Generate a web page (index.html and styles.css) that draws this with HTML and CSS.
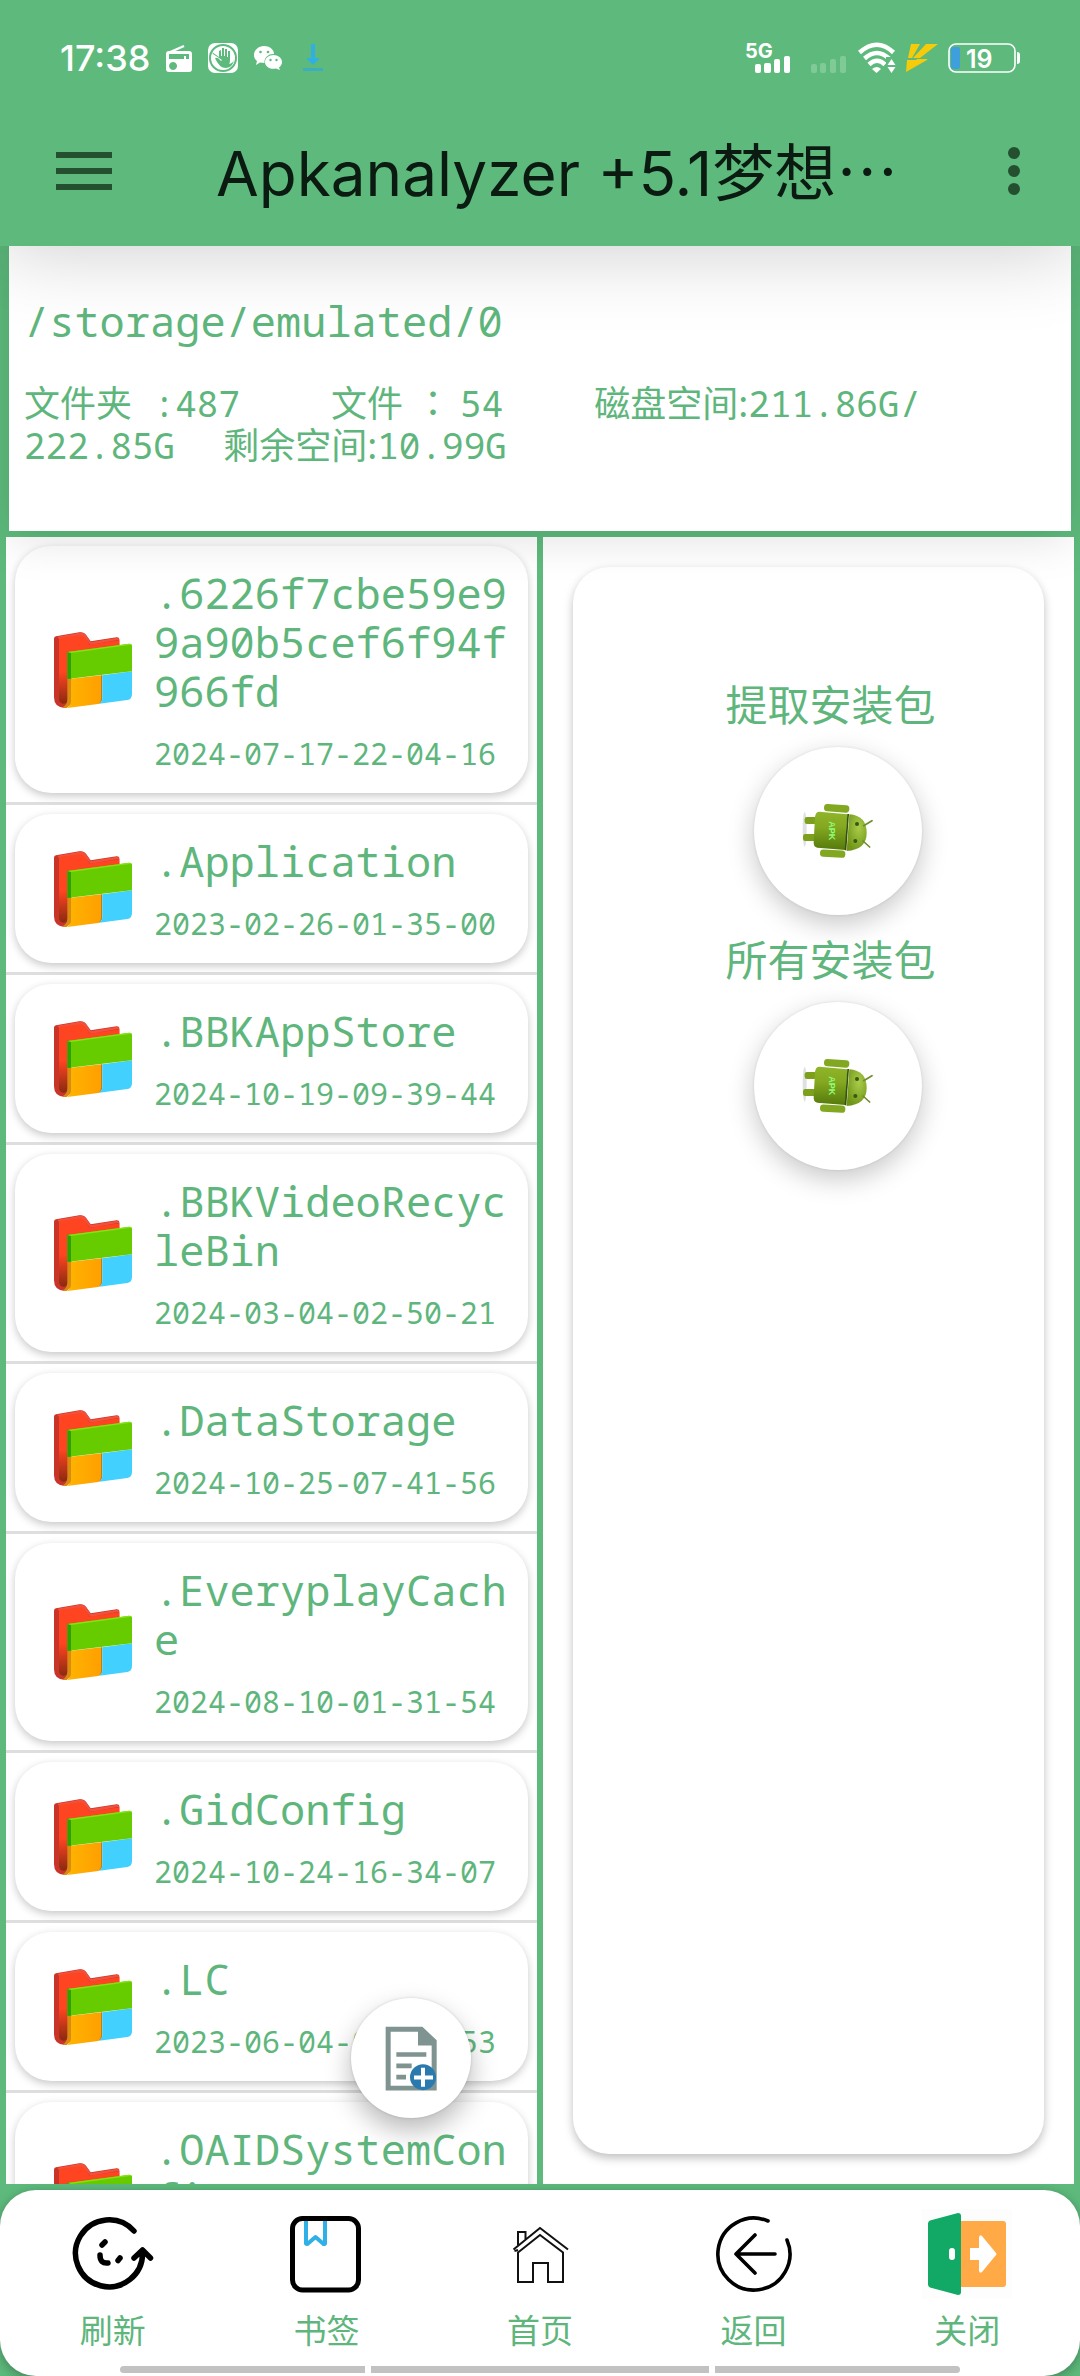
FILE: index.html
```html
<!DOCTYPE html>
<html lang="zh-CN">
<head>
  <meta charset="UTF-8" />
  <meta name="viewport" content="width=device-width, initial-scale=1.0"/>
  <title>Apkanalyzer</title>
  <link rel="stylesheet" href="styles.css">
</head>
<body>
  <!-- 公用图标 -->
  <svg class="defs" aria-hidden="true">
    <defs>
      <linearGradient id="g-side" x1="0" y1="0" x2="0" y2="1">
        <stop offset="0.5" stop-color="#ff4422"/>
        <stop offset="1" stop-color="#8a2a10"/>
      </linearGradient>
      <linearGradient id="g-orange" x1="0" y1="0" x2="1" y2="0">
        <stop offset="0" stop-color="#ffb400"/>
        <stop offset="1" stop-color="#ff9f00"/>
      </linearGradient>
      <linearGradient id="g-body" x1="0" y1="0" x2="0" y2="1">
        <stop offset="0" stop-color="#8fb52a"/>
        <stop offset="0.4" stop-color="#84a820"/>
        <stop offset="1" stop-color="#557a0c"/>
      </linearGradient>
      <radialGradient id="g-head" cx="0.6" cy="0.35" r="0.7">
        <stop offset="0" stop-color="#a9cc4a"/>
        <stop offset="1" stop-color="#6f9416"/>
      </radialGradient>
    </defs>
    <symbol id="folder" viewBox="42 62 234 228">
      <path fill="#c93429" d="M42 82q0-6 6-7l70-12q14-2 21 9l13 18 78-12q8 0 8 7v30L84 130v150l-10 10q-32-2-32-32z"/>
      <path fill="#f0503c" d="M52 76l66-12q14-2 20 8l14 20 79-13q6 0 7 6l-86 16-18-20q-6-8-14-6l-62 9z"/>
      <path fill="#ff4422" d="M57 86q0-6 6-7l58-7q10 0 16 10l12 18 89-13v28L84 140l-27 10z"/>
      <path fill="url(#g-side)" d="M57 84h27v180q-2 14-14 13t-13-14z"/>
      <path fill="#d98a10" d="M82 200h13v78l-15 12q-6 1-12-2 14-7 14-24z"/>
      <path fill="url(#g-orange)" d="M93 202l91-10v68q0 16-10 18l-92 12q11-8 11-20z"/>
      <path fill="#a8842a" d="M183 192h4v68q0 12-8 16l-5 2q9-6 9-18z"/>
      <path fill="#42d0ff" d="M187 192l89-12v68q0 16-14 18l-84 11q9-6 9-18z"/>
      <path fill="#66cc00" d="M82 122l186-25q8 0 8 7v76L82 203z"/>
      <path fill="#2fa000" d="M82 120l11 4v78l-11 1z"/>
      <path fill="#85e312" d="M82 122l186-25 7 3-182 25z"/>
    </symbol>
    <symbol id="android" viewBox="360 420 225 180">
      <ellipse cx="374" cy="505" rx="6" ry="52" fill="#999" opacity="0.3"/>
      <rect x="374" y="468" width="36" height="21" rx="7" fill="#7c9f1c"/>
      <rect x="369" y="519" width="40" height="21" rx="7" fill="#7c9f1c"/>
      <rect x="432" y="431" width="76" height="22" rx="10" fill="#82a822" transform="rotate(4 470 442)"/>
      <rect x="420" y="567" width="76" height="22" rx="10" fill="#82a822" transform="rotate(3 458 578)"/>
      <path fill="url(#g-body)" d="M418 452l84 8-6 107-84-7q-12-2-11-16l4-76q2-16 13-16z"/>
      <path fill="#33520a" d="M502 459h5l-8 109h-5z"/>
      <path fill="url(#g-head)" d="M508 460q52 4 52 56 0 50-60 54z"/>
      <path d="M551 494l25-15M549 540l20 18" stroke="#6d8e2a" stroke-width="5" stroke-linecap="round"/>
      <circle cx="531" cy="489" r="6" fill="#3c5710"/>
      <circle cx="526" cy="540" r="6" fill="#3c5710"/>
      <text class="apk" x="481" y="-446" transform="rotate(90)">APK</text>
    </symbol>
  </svg>

  <header class="app-header">
    <div class="status-bar">
      <span class="clock">17:38</span>
      <svg class="icon-radio" width="26" height="28" viewBox="0 0 26 28">
        <path d="M2 9L18 2" stroke="#fff" stroke-width="2.4"/>
        <path fill="#fff" fill-rule="evenodd" d="M3 7h20q3 0 3 3v15q0 3-3 3H3q-3 0-3-3V10q0-3 3-3zM3 10v5h15v-3h2v3h3v-5zM7 18a4 4 0 1 0 .1 0z"/>
      </svg>
      <svg width="30" height="30" viewBox="0 0 30 30">
        <rect width="30" height="30" rx="7" fill="#fff"/>
        <circle cx="15" cy="15" r="13" fill="none" stroke="#5dba7c" stroke-width="2"/>
        <path fill="#5dba7c" d="M4 9l7 5V8l2-1v6h1V5h2v8h1V6h2v8h1V8h2v9q0 3-1 4 4-1 5-4-1 7-8 8-7 0-11-10 3-1 6 3l1-1-9-6z"/>
      </svg>
      <svg width="28" height="24" viewBox="0 0 28 24">
        <path fill="#fff" d="M10 0c5.500 0 10 3.500 10 8-5-.5-10 3-9.500 9l-4.500-.5L2 19l1-4C1 13.500 0 11.500 0 9 0 4 4.500 0 10 0z"/>
        <path fill="#fff" d="M19.500 9c4.500 0 8.500 3 8.500 7 0 2-1 4-3 5.500l1 2.500-4-1.500c-6 1.500-11-2-11-6.500 0-4 4-7 8.500-7z"/>
        <g fill="#5dba7c"><circle cx="6.500" cy="6" r="1.300"/><circle cx="14" cy="6" r="1.300"/><circle cx="16.500" cy="14" r="1.200"/><circle cx="22.500" cy="14" r="1.200"/></g>
      </svg>
      <svg class="icon-down" width="20" height="28" viewBox="0 0 20 28">
        <path fill="#2fb0e0" d="M8 0h4v14h5l-7 7-7-7h5z"/>
        <path fill="#3aafc0" d="M0 24h20v3H0z"/>
      </svg>
      <div class="status-right">
        <svg width="46" height="32" viewBox="0 0 46 32">
          <text class="net" x="0" y="16">5G</text>
          <g fill="#fff"><rect x="10" y="22" width="6" height="9" rx="2"/><rect x="19" y="21" width="7" height="10" rx="2"/><rect x="29" y="17" width="6" height="14" rx="2"/><rect x="39" y="14" width="6" height="17" rx="2"/></g>
        </svg>
        <svg class="sim2" width="35" height="32" viewBox="0 0 35 32">
          <g fill="#7fca97"><rect x="0" y="22" width="6" height="9" rx="2"/><rect x="9" y="21" width="6" height="10" rx="2"/><rect x="19" y="17" width="6" height="14" rx="2"/><rect x="29" y="14" width="6" height="17" rx="2"/></g>
        </svg>
        <svg width="38" height="30" viewBox="0 0 38 30">
          <g fill="none" stroke="#fff" stroke-width="4.500">
            <path d="M1.500 9.500Q19-6 35.500 9.500"/>
            <path d="M6.500 15.500Q19 4.500 31 15.500"/>
            <path d="M11 21.500Q19 14 27 21.500"/>
          </g>
          <path fill="#fff" d="M14 26q5-4 9 0l-4.500 4z"/>
          <path fill="#5dba7c" d="M28 14h10v16h-10z"/>
          <path fill="#fff" d="M33.500 16l4 6h-8zM33.500 30l4-6h-8z"/>
        </svg>
        <svg width="32" height="28" viewBox="0 0 32 28">
          <path fill="#f6cb0a" d="M5 0h9L6 14H2zM20 0h12L14 14H7zM1 16h20L0 28zM11 15h11L0 28z"/>
        </svg>
        <svg width="72" height="30" viewBox="0 0 72 30">
          <rect x="1" y="1" width="66" height="28" rx="7" fill="none" stroke="#fff" stroke-width="1.600"/>
          <rect x="3" y="4" width="9" height="22" rx="2" fill="#3e9fdc"/>
          <path fill="#fff" d="M69 9q3 0 3 3v6q0 3-3 3z"/>
          <text class="level" x="18" y="25">19</text>
        </svg>
      </div>
    </div>
    <div class="toolbar">
      <button class="menu-btn" type="button" aria-label="菜单">
        <svg width="56" height="38" viewBox="0 0 56 38"><path fill="#24502f" d="M0 0h56v6H0zM0 16h56v6H0zM0 32h56v6H0z"/></svg>
      </button>
      <h1>Apkanalyzer +5.1梦想<span class="cjk">…</span></h1>
      <button class="more-btn" type="button" aria-label="更多">
        <svg width="12" height="48" viewBox="0 0 12 48"><g fill="#24502f"><circle cx="6" cy="6" r="6"/><circle cx="6" cy="24" r="6"/><circle cx="6" cy="42" r="6"/></g></svg>
      </button>
    </div>
  </header>

  <section class="info">
    <p class="path">/storage/emulated/0</p>
    <p class="stats">
      <span class="stat">文件夹 :487</span><span class="stat">文件<span class="colon" lang="zh-TW">：</span>54</span>磁盘空间<span class="cjk">:</span>211.86G/<wbr><span class="total">222.85G</span>剩余空间<span class="cjk">:</span>10.99G
    </p>
  </section>

  <main class="panes">
    <div class="pane left-pane">
      <ul class="file-list">
        <li><a class="card" href="#"><svg class="folder"><use href="#folder"/></svg><span class="file"><span class="name">.6226f7cbe59e99a90b5cef6f94f966fd</span><time>2024-07-17-22-04-16</time></span></a></li>
        <li><a class="card" href="#"><svg class="folder"><use href="#folder"/></svg><span class="file"><span class="name">.Application</span><time>2023-02-26-01-35-00</time></span></a></li>
        <li><a class="card" href="#"><svg class="folder"><use href="#folder"/></svg><span class="file"><span class="name">.BBKAppStore</span><time>2024-10-19-09-39-44</time></span></a></li>
        <li><a class="card" href="#"><svg class="folder"><use href="#folder"/></svg><span class="file"><span class="name">.BBKVideoRecycleBin</span><time>2024-03-04-02-50-21</time></span></a></li>
        <li><a class="card" href="#"><svg class="folder"><use href="#folder"/></svg><span class="file"><span class="name">.DataStorage</span><time>2024-10-25-07-41-56</time></span></a></li>
        <li><a class="card" href="#"><svg class="folder"><use href="#folder"/></svg><span class="file"><span class="name">.EveryplayCache</span><time>2024-08-10-01-31-54</time></span></a></li>
        <li><a class="card" href="#"><svg class="folder"><use href="#folder"/></svg><span class="file"><span class="name">.GidConfig</span><time>2024-10-24-16-34-07</time></span></a></li>
        <li><a class="card" href="#"><svg class="folder"><use href="#folder"/></svg><span class="file"><span class="name">.LC</span><time>2023-06-04-03-12-53</time></span></a></li>
        <li><a class="card" href="#"><svg class="folder"><use href="#folder"/></svg><span class="file"><span class="name">.OAIDSystemConfig</span><time></time></span></a></li>
      </ul>
      <button class="fab" type="button" aria-label="新建文件">
        <svg width="52" height="65" viewBox="255 196 156 194">
          <path fill="#7f9391" fill-rule="evenodd" d="M257 198h110l43 40v151H257zM272 213v162h123V254h-41v-41z"/>
          <path fill="#7f9391" d="M289 274h90v14h-90zM289 308h46v14h-46zM289 342h29v14h-29z"/>
          <circle cx="369" cy="349" r="39" fill="#2a7ab0"/>
          <path fill="#fff" d="M363 321h12v23h24v12h-24v22h-12v-22h-21v-12h21z"/>
        </svg>
      </button>
    </div>
    <div class="pane right-pane">
      <div class="tools">
        <div class="tool">
          <span id="t-extract">提取安装包</span>
          <button class="round" type="button" aria-labelledby="t-extract"><svg width="75" height="60"><use href="#android"/></svg></button>
        </div>
        <div class="tool">
          <span id="t-all">所有安装包</span>
          <button class="round" type="button" aria-labelledby="t-all"><svg width="75" height="60"><use href="#android"/></svg></button>
        </div>
      </div>
    </div>
  </main>

  <nav class="bottom-bar">
    <a href="#">
      <svg width="90" height="90" viewBox="0 0 90 90" fill="none" stroke="#000" stroke-width="5.500" stroke-linecap="round" stroke-linejoin="round">
        <path d="M66 22A33.500 33.500 0 1 0 74.500 43M66 49l8.500-8 8 8M34 36l3-3M50 51.500l2-2.500M32 46q0 9 8 8"/>
      </svg>
      <span>刷新</span>
    </a>
    <a href="#">
      <svg width="90" height="90" viewBox="0 0 90 90" fill="none" stroke-linejoin="round">
        <path d="M25 11v23.500q1 1 2 0l7.500-6.500 7.500 6.500q1 1 2 0V11" stroke="#2fb0e6" stroke-width="4"/>
        <rect x="11.500" y="9.500" width="66" height="71.500" rx="10" stroke="#000" stroke-width="5"/>
      </svg>
      <span>书签</span>
    </a>
    <a href="#">
      <svg width="90" height="90" viewBox="0 0 90 90" fill="none" stroke="#111" stroke-width="2">
        <path d="M18.500 40.500L45 19l28 21.500M19.500 42l3.500-1M23 36V23h7.500v7M23 43.500L45 26l23 17.500V73H53V54H38v19H23z"/>
      </svg>
      <span>首页</span>
    </a>
    <a href="#">
      <svg width="90" height="90" viewBox="0 0 90 90" fill="none" stroke="#000" stroke-width="3.600" stroke-linecap="round" stroke-linejoin="round">
        <path d="M59 12A36 36 0 1 0 78 31M46 26L27 45l19 19M27 45h39"/>
      </svg>
      <span>返回</span>
    </a>
    <a href="#">
      <svg width="90" height="90" viewBox="0 0 90 90">
        <path fill="#fdfdfd" d="M0 0h90v90H0z"/>
        <rect x="34" y="12" width="50" height="66" rx="3" fill="#ffaa47"/>
        <path fill="#12a866" d="M8 11.500L36 4q3 0 3 3v76q0 3-3 3L8 78.500q-2-1-2-3v-61q0-2 2-3z"/>
        <rect x="27" y="39" width="6" height="12" rx="3" fill="#fff"/>
        <path fill="#fff" d="M48 39h9V28q1-3 3-1l14 17q1 1 0 2L60 63q-2 2-3-1V51h-9z"/>
      </svg>
      <span>关闭</span>
    </a>
    <div class="gesture"><i></i><i></i><i></i></div>
  </nav>
</body>
</html>
```
FILE: styles.css
```css
* {
  box-sizing: border-box;
}

body {
  margin: 0;
  height: 100vh;
  display: flex;
  flex-direction: column;
  overflow: hidden;
  background: #5dba7c;
  color: #5fb67d;
  font-family: "Noto Sans Mono", "Droid Sans Mono", "Liberation Mono", "Noto Sans CJK SC", monospace;
  font-feature-settings: "zero";
}

button {
  padding: 0;
  border: 0;
  background: none;
}

a {
  color: inherit;
  text-decoration: none;
}

svg {
  display: block;
  flex: none;
  overflow: visible;
}

.defs {
  position: absolute;
  width: 0;
  height: 0;
}

/* 顶部 */
.app-header {
  position: relative;
  z-index: 3;
  background: #5dba7c;
  box-shadow: 0 4px 76px rgba(0,0,0,0.2);
}

.status-bar {
  display: flex;
  align-items: center;
  gap: 16px;
  height: 116px;
  padding: 0 60px;
  font-family: Inter, "Noto Sans", sans-serif;
}

.clock {
  font-size: 36px;
  font-weight: 500;
  color: #fff;
}

.icon-down {
  margin-left: 5px;
}

.status-right {
  display: flex;
  align-items: center;
  gap: 10px;
  margin-left: auto;
}

.sim2 {
  margin: 0 2px 0 10px;
}

.net {
  font-size: 20px;
  font-weight: 700;
  fill: #fff;
}

.level {
  font-size: 25px;
  font-weight: 600;
  fill: #fff;
}

.toolbar {
  display: flex;
  align-items: center;
  height: 130px;
  padding: 0 60px 21px 56px;
}

.toolbar h1 {
  flex: 1;
  margin: 0;
  padding: 6px 0 0 104px;
  font-family: Inter, "Noto Sans CJK SC", sans-serif;
  font-size: 62px;
  line-height: 72px;
  font-weight: 400;
  color: #0b1b11;
  white-space: nowrap;
}

/* 路径信息 */
.info {
  position: relative;
  z-index: 2;
  margin: 0 9px;
  padding: 48px 15px 64px;
  background: #fff;
  box-shadow: 0 6px 45px rgba(0,0,0,0.13);
}

.info p {
  margin: 0;
}

.path {
  font-size: 42px;
  line-height: 54px;
}

.info .stats {
  margin-top: 35px;
  font-size: 36px;
  line-height: 42px;
}

.stat {
  margin-right: 91px;
}

.total {
  margin-right: 48px;
}

.cjk {
  font-family: "Noto Sans CJK SC", sans-serif;
  line-height: 0;
}

.colon {
  margin: 0 9px 0 12px;
  font-family: "Noto Sans CJK TC", sans-serif;
  line-height: 0;
}

/* 左右窗格 */
.panes {
  flex: 1;
  display: grid;
  grid-template-columns: 1fr 1fr;
  gap: 6px;
  min-height: 0;
  margin: 6px;
}

.pane {
  position: relative;
  overflow: hidden;
  background: #fff;
}

.file-list {
  margin: 0;
  padding: 0;
  list-style: none;
}

.file-list li {
  padding: 9px;
  border-bottom: 3px solid #dedede;
}

.card {
  display: flex;
  align-items: center;
  gap: 22px;
  padding: 22px 16px 22px 39px;
  border-radius: 36px;
  background: #fff;
  box-shadow: 0 3px 8px rgba(0,0,0,0.22);
}

.folder {
  width: 78px;
  height: 76px;
}

.file {
  flex: 1;
  min-width: 0;
}

.name {
  display: block;
  font-size: 42px;
  line-height: 49px;
  word-break: break-all;
}

time {
  display: block;
  min-height: 35px;
  margin-top: 21px;
  font-size: 30px;
  line-height: 35px;
}

.fab {
  position: absolute;
  right: 66px;
  bottom: 66px;
  display: flex;
  align-items: center;
  justify-content: center;
  width: 120px;
  height: 120px;
  border-radius: 50%;
  background: #fff;
  box-shadow: 0 12px 27px rgba(0,0,0,0.28), 0 0 3px rgba(0,0,0,0.15);
}

.right-pane {
  display: flex;
  padding: 30px;
}

.tools {
  flex: 1;
  display: flex;
  flex-direction: column;
  align-items: center;
  padding: 108px 0 0 44px;
  border-radius: 36px;
  background: #fff;
  box-shadow: 0 4px 10px rgba(0,0,0,0.25);
}

.tool {
  display: flex;
  flex-direction: column;
  align-items: center;
  height: 255px;
  font-size: 42px;
  line-height: 60px;
}

.round {
  display: flex;
  align-items: center;
  justify-content: center;
  width: 168px;
  height: 168px;
  margin: 12px 0 0 15px;
  border-radius: 50%;
  background: #fff;
  box-shadow: 0 9px 27px rgba(0,0,0,0.22), 0 0 3px rgba(0,0,0,0.1);
}

.apk {
  font-family: "Liberation Sans", sans-serif;
  font-size: 27px;
  font-weight: 700;
  fill: #8dff7a;
}

/* 底部导航 */
.bottom-bar {
  position: relative;
  display: flex;
  height: 186px;
  padding: 19px 6px 0;
  border-radius: 36px;
  background: #fff;
  box-shadow: 0 3px 12px rgba(0,0,0,0.3);
}

.bottom-bar a {
  flex: 1;
  display: flex;
  flex-direction: column;
  align-items: center;
  gap: 8px;
  font-size: 33px;
  line-height: 48px;
}

.gesture {
  position: absolute;
  left: 120px;
  right: 120px;
  bottom: 3px;
  display: flex;
  gap: 6px;
}

.gesture i {
  flex: 8;
  height: 7px;
  background: #c2c2c2;
}

.gesture i:nth-child(2) {
  flex: 11;
}

.gesture i:first-child {
  border-radius: 4px 0 0 4px;
}

.gesture i:last-child {
  border-radius: 0 4px 4px 0;
}
```
